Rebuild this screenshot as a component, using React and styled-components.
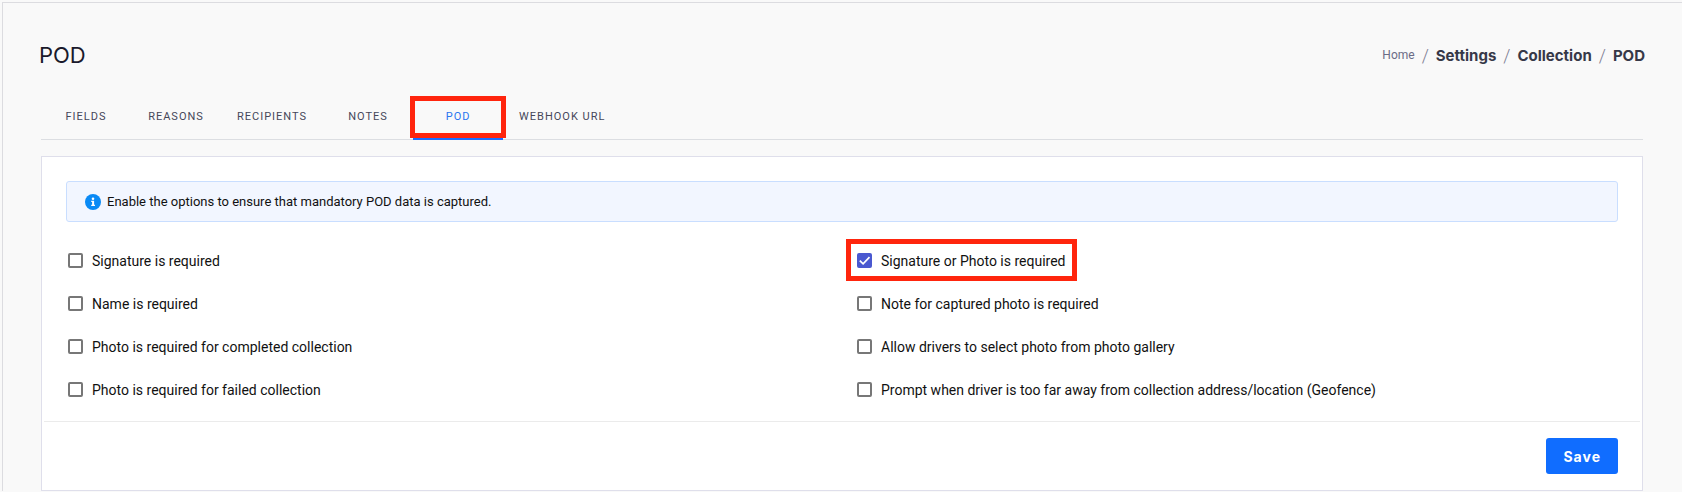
import React from "react";
import styled, { createGlobalStyle, css } from "styled-components";

const GlobalStyle = createGlobalStyle`
  * {
    box-sizing: border-box;
  }

  body {
    margin: 0;
    padding: 2px 0 0 2px;
    background-color: #f9f9f9;
    color: #111;
    font-family: Roboto, "Liberation Sans", sans-serif;
    font-size: 14px;
  }
`;

const highlight = css`
  position: relative;

  &::after {
    content: "";
    position: absolute;
    border: 5px solid #ff250d;
    pointer-events: none;
  }
`;

const Page = styled.main`
  padding: 32px 39px 0 38px;
  border-top: 1px solid #dcdce0;
  border-left: 1px solid #dcdce0;
`;

const Header = styled.header`
  display: flex;
  justify-content: space-between;
  align-items: center;
  height: 40px;
  margin: 0 -2px;
`;

const Title = styled.h1`
  margin: 0;
  color: #1a1a2c;
  font-family: Inter, sans-serif;
  font-size: 22px;
  font-weight: 400;
`;

const Breadcrumb = styled.ol`
  display: flex;
  align-items: center;
  margin: 0;
  padding: 0;
  list-style: none;
`;

const Crumb = styled.li`
  display: flex;
  align-items: center;
  color: #363848;
  font-family: Inter, sans-serif;
  font-size: 15px;
  font-weight: 700;

  & + &::before {
    content: "/";
    margin: 0 7px;
    color: #7d7e94;
    font-family: Roboto, sans-serif;
    font-size: 18px;
    font-weight: 300;
  }
`;

const CrumbLink = styled.a`
  color: #6b6c86;
  font-family: Roboto, sans-serif;
  font-size: 12px;
  font-weight: 400;
  text-decoration: none;
`;

const Tabs = styled.nav`
  display: flex;
  margin-top: 21px;
  border-bottom: 1px solid #dcdee2;
`;

const Tab = styled.a`
  display: flex;
  justify-content: center;
  align-items: center;
  min-width: 90px;
  height: 44px;
  padding: 0 16px 2px;
  border-bottom: 2px solid ${(props) => (props.$active ? "#1a6dff" : "transparent")};
  margin-bottom: -1px;
  color: ${(props) => (props.$active ? "#2a75f0" : "#46475a")};
  font-size: 11px;
  letter-spacing: 1px;
  text-decoration: none;
  text-transform: uppercase;

  ${(props) => props.$active && highlight}

  &::after {
    inset: 0 -3px 0 -3px;
  }
`;

const Card = styled.form`
  margin-top: 16px;
  border: 1px solid #dfdfeb;
  background-color: #fff;
`;

const CardBody = styled.div`
  padding: 24px 24px 10px;
`;

const Alert = styled.div`
  display: flex;
  align-items: center;
  gap: 6px;
  height: 41px;
  padding: 0 18px;
  border: 1px solid #c9deff;
  border-radius: 3px;
  background-color: #f2f6ff;
  font-size: 13px;
`;

const Options = styled.div`
  display: grid;
  grid-template-columns: 1fr 1fr;
  column-gap: 26px;
  margin-top: 17px;
`;

const Option = styled.label`
  display: flex;
  justify-self: start;
  align-items: center;
  gap: 9px;
  height: 43px;
  padding-left: 2px;

  ${(props) => props.$marked && highlight}

  &::after {
    inset: 0 -11px 1px -9px;
  }
`;

const CheckBox = styled.span`
  display: grid;

  > * {
    grid-area: 1 / 1;
  }
`;

const CheckInput = styled.input`
  appearance: none;
  width: 15px;
  height: 15px;
  margin: 0;
  border: 2px solid #777;
  border-radius: 2px;
  background-color: #fff;

  &:checked {
    border-color: #4a58d0;
    background-color: #4a58d0;
  }

  & + svg {
    visibility: hidden;
    pointer-events: none;
  }

  &:checked + svg {
    visibility: visible;
  }
`;

const CardFooter = styled.footer`
  display: flex;
  justify-content: flex-end;
  margin: 0 2px;
  padding: 16px 22px;
  border-top: 1px solid #ebebeb;
`;

const SaveButton = styled.button`
  height: 36px;
  padding: 0 17px;
  border: 0;
  border-radius: 3px;
  background-color: #106dff;
  color: #fff;
  font-family: Inter, sans-serif;
  font-size: 14px;
  font-weight: 700;
  letter-spacing: 1px;
`;

const tabs = ["Fields", "Reasons", "Recipients", "Notes", "POD", "Webhook URL"];

const options = [
  { label: "Signature is required" },
  { label: "Signature or Photo is required", checked: true, marked: true },
  { label: "Name is required" },
  { label: "Note for captured photo is required" },
  { label: "Photo is required for completed collection" },
  { label: "Allow drivers to select photo from photo gallery" },
  { label: "Photo is required for failed collection" },
  {
    label:
      "Prompt when driver is too far away from collection address/location (Geofence)",
  },
];

function InfoIcon() {
  return (
    <svg width="16" height="16" viewBox="0 0 16 16" aria-hidden="true">
      <circle cx="8" cy="8" r="8" fill="#0a8af5" />
      <circle cx="8" cy="4.7" r="1.3" fill="#fff" />
      <path d="M6.2 6.8h2.9v4h.9v1.3H6.2v-1.3h.9V8.1h-.9z" fill="#fff" />
    </svg>
  );
}

function CheckIcon() {
  return (
    <svg width="15" height="15" viewBox="0 0 15 15" aria-hidden="true">
      <path d="M2.8 7.6l3.3 3.3 6.4-6.7" fill="none" stroke="#fff" strokeWidth="1.7" />
    </svg>
  );
}

function App() {
  return (
    <>
      <GlobalStyle />
      <Page>
        <Header>
          <Title>POD</Title>
          <Breadcrumb>
            <Crumb>
              <CrumbLink href="/">Home</CrumbLink>
            </Crumb>
            <Crumb>Settings</Crumb>
            <Crumb>Collection</Crumb>
            <Crumb>POD</Crumb>
          </Breadcrumb>
        </Header>
        <Tabs>
          {tabs.map((tab) => (
            <Tab key={tab} href="#" $active={tab === "POD"}>
              {tab}
            </Tab>
          ))}
        </Tabs>
        <Card>
          <CardBody>
            <Alert>
              <InfoIcon />
              Enable the options to ensure that mandatory POD data is captured.
            </Alert>
            <Options>
              {options.map((option) => (
                <Option key={option.label} $marked={option.marked}>
                  <CheckBox>
                    <CheckInput type="checkbox" defaultChecked={option.checked} />
                    <CheckIcon />
                  </CheckBox>
                  {option.label}
                </Option>
              ))}
            </Options>
          </CardBody>
          <CardFooter>
            <SaveButton type="button">Save</SaveButton>
          </CardFooter>
        </Card>
      </Page>
    </>
  );
}

export default App;
